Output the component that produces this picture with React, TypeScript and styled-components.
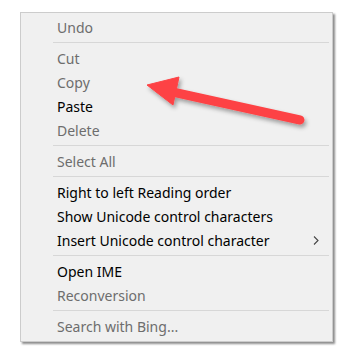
import styled, { createGlobalStyle } from 'styled-components';

const GlobalStyle = createGlobalStyle`
  html, body {
    margin: 0;
    padding: 0;
    background: #ffffff;
  }
  body {
    font-family: "Noto Sans", "Liberation Sans", sans-serif;
  }
`;

type Entry =
  | { kind: 'item'; label: string; disabled?: boolean; submenu?: boolean }
  | { kind: 'sep' };

const entries: Entry[] = [
  { kind: 'item', label: 'Undo', disabled: true },
  { kind: 'sep' },
  { kind: 'item', label: 'Cut', disabled: true },
  { kind: 'item', label: 'Copy', disabled: true },
  { kind: 'item', label: 'Paste' },
  { kind: 'item', label: 'Delete', disabled: true },
  { kind: 'sep' },
  { kind: 'item', label: 'Select All', disabled: true },
  { kind: 'sep' },
  { kind: 'item', label: 'Right to left Reading order' },
  { kind: 'item', label: 'Show Unicode control characters' },
  { kind: 'item', label: 'Insert Unicode control character', submenu: true },
  { kind: 'sep' },
  { kind: 'item', label: 'Open IME' },
  { kind: 'item', label: 'Reconversion', disabled: true },
  { kind: 'sep' },
  { kind: 'item', label: 'Search with Bing...', disabled: true },
];

const App = () => {
  return (
    <>
      <GlobalStyle />
      <Page>
        <Menu>
          {entries.map((e, i) =>
            e.kind === 'sep' ? (
              <Separator key={i} />
            ) : (
              <Item key={i} $disabled={e.disabled}>
                <Label>{e.label}</Label>
                {e.submenu && (
                  <Chevron viewBox="0 0 6 9" width="6" height="9">
                    <path d="M1 0.5 L5 4.5 L1 8.5" fill="none" stroke="#444" strokeWidth="1.1" />
                  </Chevron>
                )}
              </Item>
            )
          )}
        </Menu>
        <Arrow viewBox="0 0 359 363" width="359" height="363">
          <defs>
            <filter id="shadow" x="-20%" y="-20%" width="140%" height="160%">
              <feDropShadow dx="2" dy="3" stdDeviation="2" floodColor="#000" floodOpacity="0.35" />
            </filter>
          </defs>
          <g filter="url(#shadow)" fill="#fd4345" stroke="#fd4345">
            <line x1="168" y1="91" x2="300" y2="120" strokeWidth="9" strokeLinecap="round" />
            <polygon points="147,85 179,77 173,105" strokeWidth="1" strokeLinejoin="round" />
          </g>
        </Arrow>
      </Page>
    </>
  );
};

export default App;

const Page = styled.div`
  position: relative;
  width: 359px;
  height: 363px;
  padding: 12px 0 0 20px;
  box-sizing: border-box;
`;

const Menu = styled.div`
  width: 313px;
  box-sizing: border-box;
  background: #f0f0f0;
  border: 1px solid #cccccc;
  padding: 2px 2px 3px 2px;
  box-shadow: 2px 2px 2px rgba(0, 0, 0, 0.45);
`;

const Item = styled.div<{ $disabled?: boolean }>`
  display: flex;
  align-items: center;
  height: 24px;
  padding-left: 34px;
  padding-right: 11px;
  font-size: 14px;
  color: ${(p) => (p.$disabled ? '#6d6d6d' : '#000000')};
`;

const Label = styled.span`
  flex: 1;
  white-space: nowrap;
`;

const Chevron = styled.svg`
  flex: none;
`;

const Separator = styled.div`
  height: 7px;
  display: flex;
  align-items: center;
  padding-left: 30px;
  padding-right: 1px;

  &::after {
    content: '';
    flex: 1;
    height: 1px;
    background: #d7d7d7;
  }
`;

const Arrow = styled.svg`
  position: absolute;
  left: 0;
  top: 0;
  pointer-events: none;
`;
